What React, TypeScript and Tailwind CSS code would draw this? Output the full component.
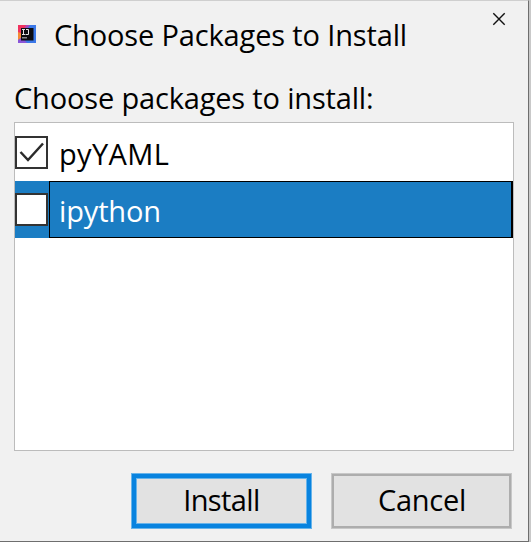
import React from "react";

function AppIcon() {
  return (
    <svg width="18" height="18" viewBox="0 0 18 18" className="block shrink-0">
      <rect width="18" height="18" fill="#3b78e8" />
      <path d="M0 0H11L8 4L3 18H0Z" fill="#f0325f" />
      <path d="M0 7L5 9L2 18L0 15Z" fill="#f58a35" />
      <path d="M0 15L4 12L9 18H0Z" fill="#8a55d8" />
      <path d="M8 0H12L9 4H6Z" fill="#a848b8" />
      <rect x="3" y="3" width="12.5" height="12.5" fill="#0c0c10" />
      <path d="M4 4.5H7M5.5 4.5V9.5M4 9.5H7M8 4.5H10.5V9.5H7.5" fill="none" stroke="#e4e4e4" strokeWidth="1" />
      <rect x="4" y="12" width="5" height="1.5" fill="#85858a" />
    </svg>
  );
}

function CheckBox({ checked }: { checked: boolean }) {
  return (
    <span className="block h-[33px] w-[33px] shrink-0 border-2 border-[#333] bg-white">
      {checked && (
        <svg width="29" height="29" viewBox="0 0 29 29" className="block">
          <path d="M3.5 14L11 22L26 5.5" fill="none" stroke="#2b2b2b" strokeWidth="2.5" />
        </svg>
      )}
    </span>
  );
}

export default function App() {
  return (
    <div className="flex h-[542px] w-[531px] bg-[#c9c9c9] font-['Open_Sans','Noto_Sans',sans-serif] text-[29px] leading-[40px] whitespace-nowrap text-black">
      <div className="flex h-[542px] w-[529px] flex-col border-t border-r border-b border-t-[#cfcfcf] border-r-[#6e6e6e] border-b-[#6e6e6e] bg-[#f1f1f1]">
        <header className="flex h-[75px] shrink-0 items-start pl-[18px]">
          <div className="pt-6">
            <AppIcon />
          </div>
          <h1 className="ml-[18px] pt-[14px] tracking-[-0.15px]">Choose Packages to Install</h1>
          <svg width="14" height="14" viewBox="0 0 14 14" className="mt-[11px] mr-[22px] ml-auto block">
            <path d="M1.3 1.3L12.7 12.7M12.7 1.3L1.3 12.7" stroke="#111" strokeWidth="1.4" />
          </svg>
        </header>
        <p className="h-[46px] shrink-0 pt-[2px] pl-[14px] tracking-[-0.17px]">Choose packages to install:</p>
        <div className="ml-[14px] h-[329px] w-[500px] shrink-0 border border-[#bcbcbc] bg-white">
          <div className="flex h-[58px] items-start pt-[13px]">
            <CheckBox checked />
            <span className="-mt-[2px] ml-[11px] tracking-[0.35px]">pyYAML</span>
          </div>
          <div className="flex h-[57px] bg-[#1b7dc3] text-white">
            <div className="w-[34px] pt-3">
              <CheckBox checked={false} />
            </div>
            <div className="h-[57px] w-[464px] border border-r-2 border-black pt-[9px] pl-[9px] tracking-[-0.15px]">ipython</div>
          </div>
        </div>
        <footer className="mt-[22px] flex pl-[131px]">
          <button className="h-[56px] w-[181px] border border-[#68b4ea] bg-[#0883df] p-1">
            <span className="flex h-[46px] items-center justify-center border border-[#68b4ea] bg-[#e2e2e2] pb-[2px] tracking-[-0.6px]">Install</span>
          </button>
          <button className="ml-[19px] h-[56px] w-[181px] border border-[#c8c8c8] bg-[#adadad] p-0.5">
            <span className="flex h-[50px] items-center justify-center bg-[#e2e2e2] pb-[2px] pl-[1px] tracking-[-0.3px]">Cancel</span>
          </button>
        </footer>
      </div>
    </div>
  );
}
